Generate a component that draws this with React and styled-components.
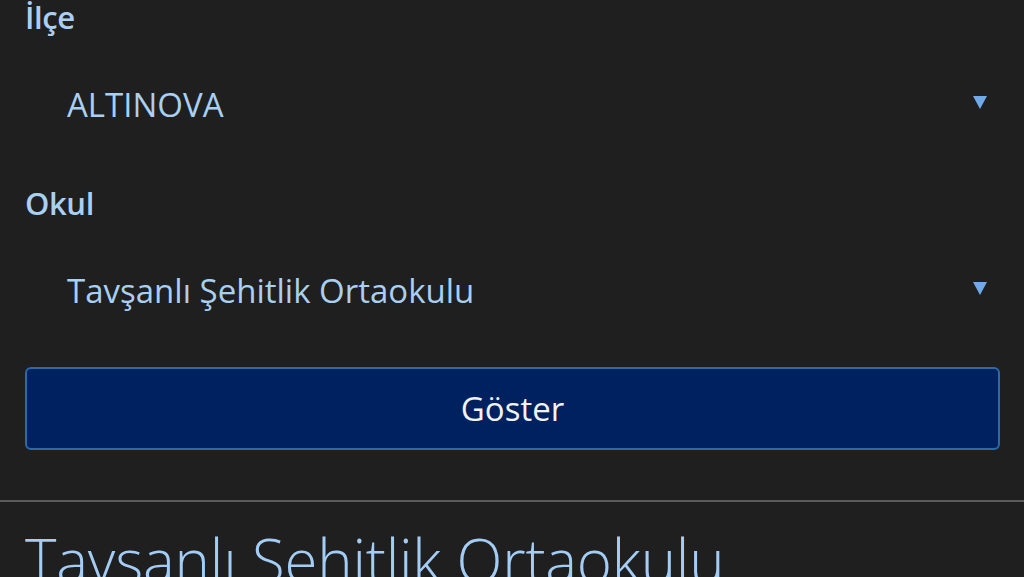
import React from 'react';
import styled, { createGlobalStyle } from 'styled-components';

const GlobalStyle = createGlobalStyle`
    html, body {
        margin: 0;
        padding: 0;
        background: #1f1f1f;
        overflow: hidden;
    }
    body {
        font-family: "Open Sans", "Noto Sans", sans-serif;
    }
`;

const Page = styled.div`
    width: 1024px;
    height: 577px;
    overflow: hidden;
    background: #1f1f1f;
    color: #a9cff3;
`;

const Form = styled.div`
    padding: 0 24px 0 25px;
`;

const Field = styled.div`
    display: flex;
    flex-direction: column;
    margin-bottom: ${props => props.last ? 36 : 41}px;
`;

const Label = styled.div`
    font-size: 31px;
    font-weight: 600;
    line-height: 34px;
    letter-spacing: -0.4px;
    color: #a9cff3;
`;

const Select = styled.div`
    display: flex;
    align-items: center;
    justify-content: space-between;
    height: 80px;
    margin-top: 31px;
    padding: 0 13px 0 42px;
    cursor: pointer;
`;

const Value = styled.span`
    font-size: 33px;
    line-height: 40px;
    color: #a9cff3;
`;

const Arrow = styled.svg`
    width: 14px;
    height: 13px;
    margin-top: -6px;
    fill: #70aae8;
`;

const Button = styled.button`
    display: flex;
    align-items: center;
    justify-content: center;
    width: 100%;
    height: 83px;
    box-sizing: border-box;
    border: 2px solid #2a6aa8;
    border-radius: 6px;
    background: #00215f;
    color: #f2f2f2;
    font-family: "Open Sans", "Noto Sans", sans-serif;
    font-size: 33px;
    cursor: pointer;
`;

const Divider = styled.hr`
    margin: 50px 0 0;
    border: 0;
    border-top: 2px solid #5a5a5a;
`;

const Title = styled.h1`
    margin: 24px 0 0;
    padding-left: 25px;
    font-size: 60px;
    font-weight: 300;
    line-height: 68px;
    letter-spacing: -0.2px;
    color: #a4cdf6;
    white-space: nowrap;
`;

const DownArrow = () => (
    <Arrow viewBox="0 0 14 13">
        <polygon points="0,0 14,0 7,13"/>
    </Arrow>
);

const fields = [
    { label: 'İlçe', value: 'ALTINOVA' },
    { label: 'Okul', value: 'Tavşanlı Şehitlik Ortaokulu' }
];

export default function App() {
    return (
        <Page>
            <GlobalStyle/>
            <Form>
                {fields.map((f, i) => (
                    <Field key={f.label} last={i === fields.length - 1}>
                        <Label>{f.label}</Label>
                        <Select>
                            <Value>{f.value}</Value>
                            <DownArrow/>
                        </Select>
                    </Field>
                ))}
                <Button>Göster</Button>
            </Form>
            <Divider/>
            <Title>Tavşanlı Şehitlik Ortaokulu</Title>
        </Page>
    );
}
